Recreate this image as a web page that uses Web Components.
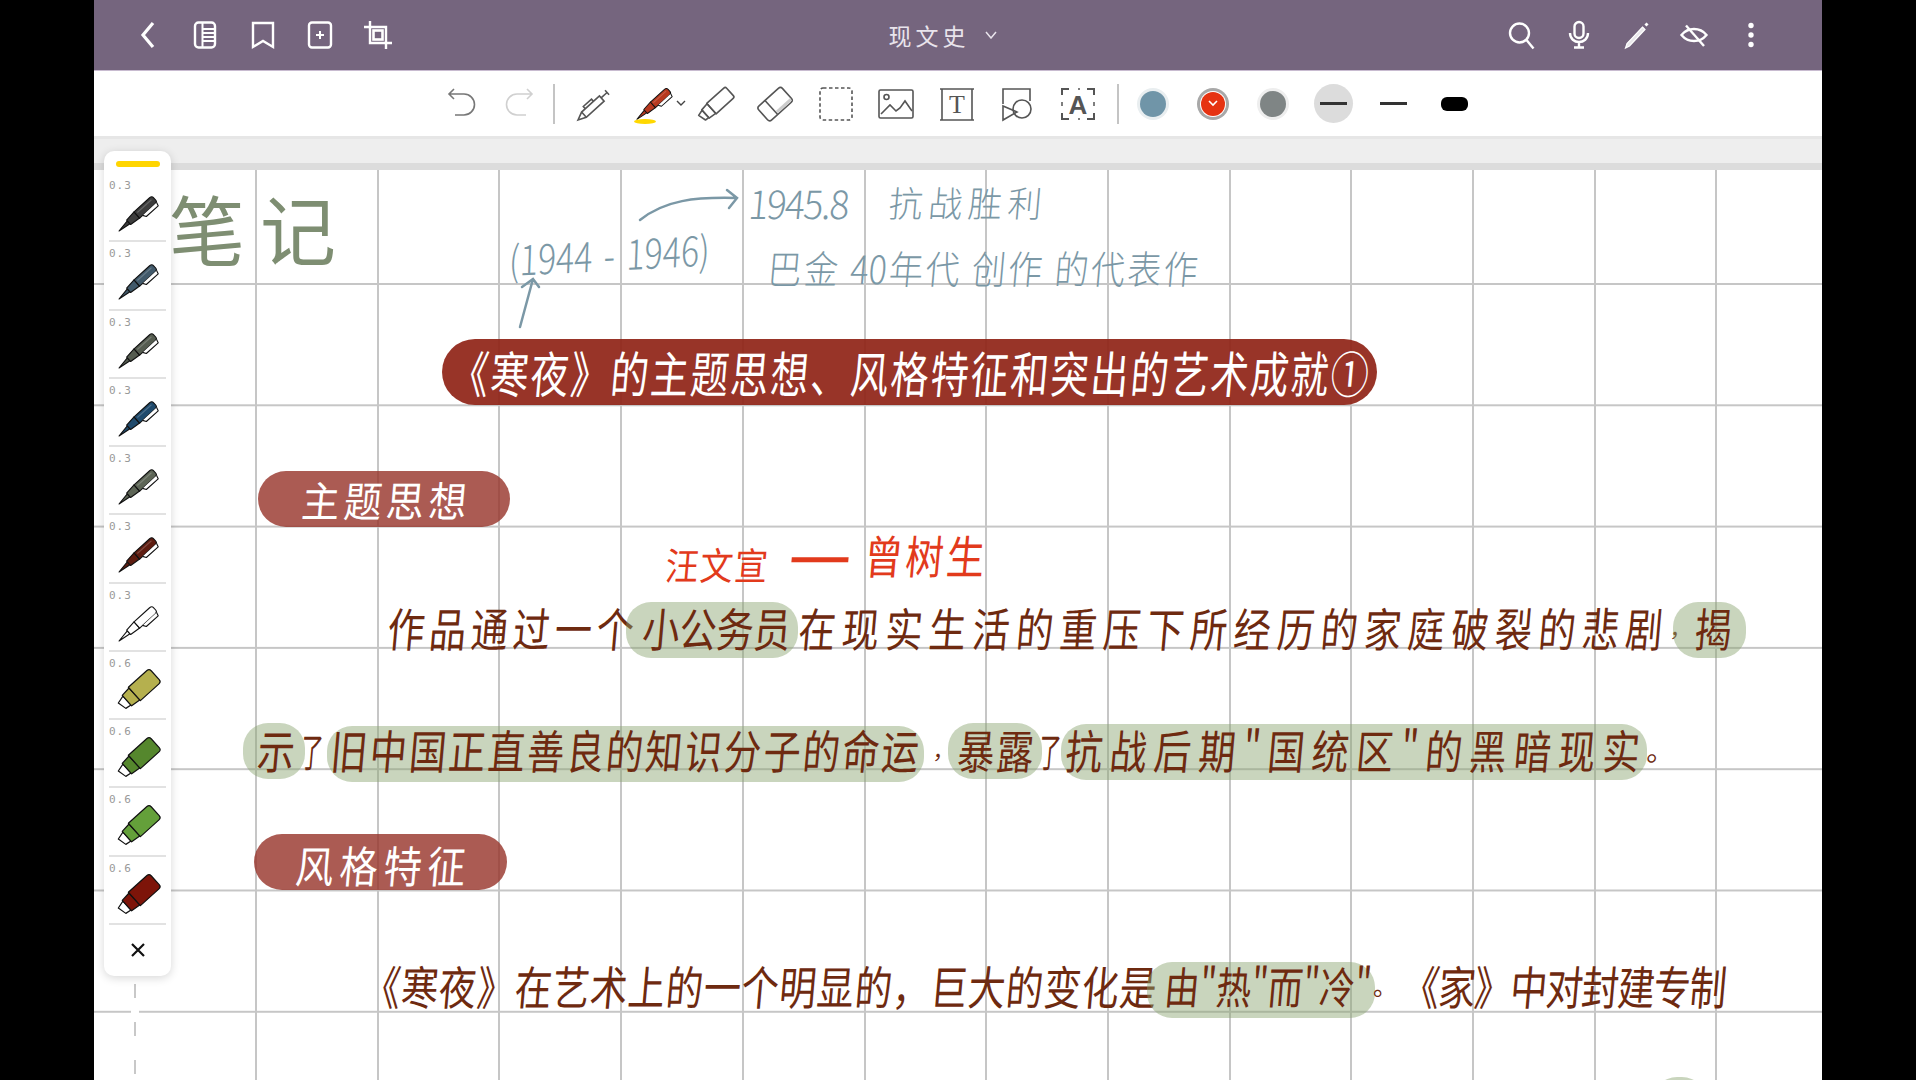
<!DOCTYPE html>
<html lang="zh-CN">
<head>
<meta charset="utf-8">
<title>现文史</title>
<style>
  html, body { margin: 0; background: #000; overflow: hidden; }
  body { font-family: "Noto Sans CJK SC", "Noto Sans", sans-serif; }
</style>
</head>
<body>
<note-app>
  <top-bar slot="top"></top-bar>
  <tool-bar slot="tools"></tool-bar>
  <pen-rail slot="rail"></pen-rail>
  <note-paper slot="paper">
    <note-ink></note-ink>

    <note-line x="169" y="197" style="--fs:76px;--sy:1;--sk:0deg;color:#7e8e72"><hand-run style="--w:167px">笔记</hand-run></note-line>

    <note-line x="749" y="172" style="--fs:37px;--sy:1.05;--fw:300;color:#7b98a6"><hand-run style="--w:113px;--ls:-1.5px">1945.8</hand-run><hand-run style="--w:153px;--ml:27px;--fs:34px">抗战胜利</hand-run></note-line>
    <note-line x="509" y="224" style="--fs:34px;--sy:1.2;--fw:300;--rot:-3deg;color:#7b98a6"><hand-run style="--w:201px">(1944 - 1946)</hand-run></note-line>
    <note-line x="768" y="238" style="--fs:34px;--sy:1.15;--fw:300;color:#7b98a6"><hand-run style="--w:430px">巴金 40年代 创作 的代表作</hand-run></note-line>

    <note-pill x="442" y="339" w="935" h="66" tone="deep"><hand-run style="--w:918px;--fs:38px;--sy:1.3">《寒夜》的主题思想、风格特征和突出的艺术成就①</hand-run></note-pill>
    <note-pill x="258" y="471" w="252" h="56" tone="soft"><hand-run style="--w:165px;--fs:38px;--sy:1.1">主题思想</hand-run></note-pill>
    <note-pill x="254" y="834" w="253" h="56" tone="soft"><hand-run style="--w:170px;--fs:38px;--sy:1.15;--ty:3px">风格特征</hand-run></note-pill>

    <note-line x="666" y="534" style="--fs:33px;--sy:1.15;color:#e23a1c"><hand-run style="--w:102px">汪文宣</hand-run></note-line>
    <note-line x="789" y="527" style="--fs:62px;--sy:1;color:#e23a1c"><hand-run style="--w:61px">一</hand-run></note-line>
    <note-line x="865" y="525" style="--fs:38px;--sy:1.2;color:#e23a1c"><hand-run style="--w:120px">曾树生</hand-run></note-line>

    <note-line x="388" y="600" style="--fs:37px;--ty:-3px;color:#6e2a10">
      <hand-run style="--w:246px">作品通过一个</hand-run>
      <hand-run hl style="--w:148px;--ml:9px;--pl:17px;--pr:7px">小公务员</hand-run>
      <hand-run style="--w:864px;--ml:8px">在现实生活的重压下所经历的家庭破裂的悲剧</hand-run>
      <hand-run style="--w:22px;--ml:7px;--fs:22px;--sy:1">，</hand-run>
      <hand-run hl style="--w:37px;--ml:3px;--pl:22px;--pr:14px">揭</hand-run>
    </note-line>

    <note-line x="258" y="722" style="--fs:37px;--ty:-3px;color:#6e2a10">
      <hand-run hl style="--w:37px;--pl:15px;--pr:10px;--dy:-1px">示</hand-run>
      <hand-run style="--w:22px;--ml:6px;--fs:22px;--sy:1.8">了</hand-run>
      <hand-run hl style="--w:588px;--ml:8px;--pl:4px;--pr:5px;--dy:2px">旧中国正直善良的知识分子的命运</hand-run>
      <hand-run style="--w:22px;--ml:14px;--fs:22px;--sy:1">，</hand-run>
      <hand-run hl style="--w:76px;--ml:3px;--pl:10px;--pr:8px;--dy:-1px">暴露</hand-run>
      <hand-run style="--w:22px;--ml:5px;--fs:22px;--sy:1.8">了</hand-run>
      <hand-run hl style="--w:574px;--ml:5px;--pl:5px;--pr:7px">抗战后期"国统区"的黑暗现实</hand-run>
      <hand-run style="--w:28px;--ml:7px;--fs:28px;--sy:1">。</hand-run>
    </note-line>

    <note-line x="364" y="960" style="--fs:37px;--ty:-5px;color:#6e2a10">
      <hand-run style="--w:793px">《寒夜》在艺术上的一个明显的，巨大的变化是</hand-run>
      <hand-run hl style="--w:203px;--ml:8px;--pl:18px;--pr:7px;--fs:35px">由"热"而"冷"</hand-run>
      <hand-run style="--w:24px;--ml:5px;--fs:24px;--sy:1;--sk:0deg">。</hand-run>
      <hand-run style="--w:320px;--ml:6px;--ls:-4px">《家》中对封建专制</hand-run>
    </note-line>

    <note-line x="1660" y="1075" style="--fs:37px"><hand-run hl style="--w:40px;--pl:8px;--pr:7px"></hand-run></note-line>
  </note-paper>
</note-app>

<script>
// icons are kept in one table, 28 box for the purple bar and 36 for the white one
const ICONS = {
  back: '<path d="M19 2 9 14l10 12" stroke-width="3.2"/>',
  panel: '<rect x="4" y="1.500" width="20" height="25" rx="3.500"/><path d="M11.500 2v24M11.500 8h12M11.500 12h12M11.500 16h12M11.500 20h12" stroke-width="2"/>',
  bookmark: '<path d="M4 2h20v24l-10-6-10 6z"/>',
  addpage: '<rect x="3" y="1.500" width="22" height="25" rx="3"/><path d="M14 10v8M10 14h8" stroke-width="2"/>',
  crop: '<path d="M6 0v22h22M0 6h22v22" stroke-width="2.400"/><rect x="9.500" y="9.500" width="9" height="9" stroke-width="2.600"/>',
  search: '<circle cx="12.500" cy="12" r="9.500"/><path d="m19.500 19 7 8.500"/>',
  mic: '<rect x="9.500" y="1" width="9" height="16" rx="4.500"/><path d="M5 12c0 12 18 12 18 0M14 21v5M9 26.500h10"/>',
  stylus: '<path d="M20.500 6 23 8.500 7.500 25 3.500 27 5 22.500z" fill="currentColor" fill-opacity=".85" stroke-width="1.200"/><path d="m23.500 2.500 2 2" stroke-width="3"/>',
  eyeoff: '<path d="M1.500 14C8 6 20 6 26.500 14 20 22 8 22 1.500 14z"/><path d="M6 4.500 24 25"/>',
  dots: '<g fill="currentColor" stroke="none"><circle cx="14" cy="4.500" r="2.700"/><circle cx="14" cy="14" r="2.700"/><circle cx="14" cy="23.500" r="2.700"/></g>',
  undo: '<path d="M8 3 3 8l5 5M3 8h15a10.500 10.500 0 0 1 0 21H9"/>',
  redo: '<path d="m28 3 5 5-5 5M33 8H18a10.500 10.500 0 0 0 0 21h9"/>',
  fountain: '<g transform="translate(3 34) rotate(-42)"><path d="M0 0 8-3.500H32V3.500H8Z"/><path d="M8-3.500V3.500M13-3.500V-6.500H24V-3.500M32-1H40M40-4V2"/></g>',
  marker: '<g transform="translate(4 32) rotate(-42)" stroke-linejoin="round"><path d="M0-3.500 6-5V5L2 4.500Z"/><path d="M6-5.500 14-6.500V6.500L6 5.500Z"/><path d="M14-7H37Q39-7 39-5V5Q39 7 37 7H14Z"/></g>',
  eraser: '<g transform="translate(4.500 27) rotate(-42)"><rect y="-7" width="32" height="19" rx="3"/><path d="M11-7V12"/><path d="M12 8H31V11H12Z" fill="#ccc" stroke="none"/></g>',
  lasso: '<rect x="2" y="2" width="32" height="32" rx="3" stroke-dasharray="3.500 2.500"/>',
  image: '<rect x="1" y="4" width="34" height="28" rx="1.500"/><circle cx="8.500" cy="11" r="2.500"/><path d="m3 28 9-9 6 6 4-3 5-7 7 10"/>',
  textbox: '<path d="M1 3h34M1 34h34M3 3v31M33 3v31"/><text x="18" y="27" text-anchor="middle" font-family="Liberation Serif" font-size="26" fill="currentColor" stroke="none">T</text>',
  shapes: '<path d="M3 18V3h27v12M3 20v14l14-8z"/><circle cx="22" cy="23" r="9"/>',
  ocr: '<path d="M2 9V3h7M27 3h7v6M2 27v6h7M27 33h7v-6" stroke-width="2"/><path d="M18 3h2M18 33h2M2 16v4M34 16v4" stroke-width="1.500"/><text x="18" y="28" text-anchor="middle" font-family="Liberation Sans" font-weight="700" font-size="26" fill="currentColor" stroke="none">A</text>'
};

class AppIcon extends HTMLElement {
  connectedCallback() {
    const name = this.getAttribute('name');
    const box = this.getAttribute('box') || 28;
    const stroke = this.getAttribute('stroke') || 2.4;
    this.attachShadow({ mode: 'open' }).innerHTML = `
      <style>
        :host { display: block; width: ${box}px; height: ${box}px; }
        svg { display: block; overflow: visible; }
      </style>
      <svg width="${box}" height="${box}" viewBox="0 0 ${box} ${box}" fill="none" stroke="currentColor" stroke-width="${stroke}">${ICONS[name]}</svg>`;
  }
}

// the pens of the side rail, drawn lying flat and then turned
class PenGlyph extends HTMLElement {
  connectedCallback() {
    const c = this.getAttribute('color') || '#444';
    const kind = this.getAttribute('kind') || 'pen';
    const pen = `
      <g transform="translate(1 35) rotate(-42)" stroke="#111" stroke-width="1.100" stroke-linejoin="round">
        <path d="M0 0 13-2V2Z" fill="${c}"/>
        <path d="M13-3 24-4.200V4.200L13 3Z" fill="${c}"/>
        <path d="M24-4.200H45Q48-4.200 48-1.500V1.500Q48 4.200 45 4.200H24Z" fill="${c}"/>
        <path d="M28 4.200 30 7.500H46L47 4" fill="#fff"/>
        <path d="M26-1.500H45" stroke="#fff" stroke-opacity=".2"/>
      </g>`;
    const marker = `
      <g transform="translate(3 32) rotate(-42)" stroke="#111" stroke-width="1.200" stroke-linejoin="round">
        <path d="M0-4 8-6V6L2 5Z" fill="#fff"/>
        <path d="M8-7 18-8V8L8 7Z" fill="${c}"/>
        <path d="M18-9H43Q46-9 46-6V6Q46 9 43 9H18Z" fill="${c}"/>
      </g>`;
    this.attachShadow({ mode: 'open' }).innerHTML = `
      <style>
        :host { display: block; width: 40px; height: 36px; }
        svg { display: block; overflow: visible; }
      </style>
      <svg width="40" height="36" viewBox="0 0 40 36">${kind === 'marker' ? marker : pen}</svg>`;
  }
}

class NoteApp extends HTMLElement {
  constructor() {
    super();
    this.attachShadow({ mode: 'open' }).innerHTML = `
      <style>
        :host { display: block; width: 1916px; height: 1080px; background: #000; position: relative; overflow: hidden; }
        .screen { position: absolute; inset: 0 94px; display: flex; flex-direction: column; background: #fff; overflow: hidden; }
        .strip { flex: none; height: 34px; box-sizing: border-box; background: #eee; border-top: 3px solid #e6e6e6; border-bottom: 7px solid #dcdcdc; }
      </style>
      <div class="screen">
        <slot name="top"></slot>
        <slot name="tools"></slot>
        <div class="strip"></div>
        <slot name="paper"></slot>
      </div>
      <slot name="rail"></slot>`;
  }
}

class TopBar extends HTMLElement {
  constructor() {
    super();
    const left = ['back', 'panel', 'bookmark', 'addpage', 'crop'];
    const right = ['search', 'mic', 'stylus', 'eyeoff', 'dots'];
    const btns = list => list.map(n => `<span class="btn"><app-icon name="${n}"></app-icon></span>`).join('');
    this.attachShadow({ mode: 'open' }).innerHTML = `
      <style>
        :host { display: flex; flex: none; align-items: center; height: 71px; box-sizing: border-box; padding: 0 42px 1px 25px; background: #75657e; border-bottom: 1px solid #c8bbd0; color: #fff; }
        .btn { display: flex; width: 57.500px; height: 70px; align-items: center; justify-content: center; }
        .title { margin-left: 482px; font-size: 23px; letter-spacing: 4px; color: #e9e4ec; font-family: "Noto Sans CJK SC", sans-serif; }
        .caret { margin-left: 15px; }
        .right { margin-left: auto; display: flex; }
        .left { display: flex; }
      </style>
      <div class="left">${btns(left)}</div>
      <span class="title">现文史</span>
      <svg class="caret" width="12" height="8" viewBox="0 0 12 8" fill="none" stroke="#e9e4ec" stroke-width="1.500"><path d="m1 1 5 6 5-6"/></svg>
      <div class="right">${btns(right)}</div>`;
  }
}

class ToolBar extends HTMLElement {
  constructor() {
    super();
    const tool = (n, cls = '') => `<span class="tool ${cls}"><app-icon name="${n}" box="36" stroke="1.600"></app-icon></span>`;
    this.attachShadow({ mode: 'open' }).innerHTML = `
      <style>
        :host { display: flex; flex: none; align-items: center; height: 65px; padding-left: 340px; background: #fff; color: #555; }
        .tool { position: relative; flex: none; width: 60.600px; height: 65px; display: flex; align-items: center; justify-content: center; }
        .undo { color: #777; margin-right: -8px; }
        .redo { color: #d0d0d0; }
        .sep { flex: none; width: 2px; height: 40px; background: #c4c4c4; margin: 0 8px 0 6px; }
        .ink { position: absolute; left: 10px; bottom: 12px; width: 22px; height: 5px; border-radius: 50%; background: #ffd800; }
        .more { position: absolute; right: -2px; top: 29px; }
        .swatch { flex: none; width: 60.300px; display: flex; align-items: center; justify-content: center; }
        .dot { width: 26px; height: 26px; border-radius: 50%; box-shadow: 0 0 0 3px #e9eef0; }
        .blue { background: #7095a8; }
        .gray { background: #7f8585; box-shadow: 0 0 0 3px #eee; }
        .red { width: 24px; height: 24px; background: #e63312; box-shadow: 0 0 0 1px #fff, 0 0 0 4px #a8a8a8; display: flex; align-items: center; justify-content: center; }
        .sel { width: 39px; height: 39px; border-radius: 50%; background: #dcdcdc; display: flex; align-items: center; justify-content: center; }
        .line { width: 27px; height: 3px; background: #333; }
        .fat { width: 27px; height: 14px; border-radius: 6px; background: #000; }
      </style>
      ${tool('undo', 'undo')}
      ${tool('redo', 'redo')}
      <span class="sep"></span>
      ${tool('fountain')}
      <span class="tool">
        <pen-glyph color="#b8391f" style="transform:scale(.9)"></pen-glyph><span class="ink"></span>
        <svg class="more" width="10" height="7" viewBox="0 0 10 7" fill="none" stroke="#444" stroke-width="1.400"><path d="m1 1 4 4 4-4"/></svg>
      </span>
      ${tool('marker')}
      ${tool('eraser')}
      ${tool('lasso')}
      ${tool('image')}
      ${tool('textbox')}
      ${tool('shapes')}
      ${tool('ocr')}
      <span class="sep" style="margin:0 4px 0 8px"></span>
      <span class="swatch"><span class="dot blue"></span></span>
      <span class="swatch"><span class="dot red"><svg width="10" height="7" viewBox="0 0 10 7" fill="none" stroke="#fff" stroke-width="1.600"><path d="m1 1 4 4 4-4"/></svg></span></span>
      <span class="swatch"><span class="dot gray"></span></span>
      <span class="swatch"><span class="sel"><span class="line"></span></span></span>
      <span class="swatch"><span class="line"></span></span>
      <span class="swatch"><span class="fat"></span></span>`;
  }
}

class PenRail extends HTMLElement {
  constructor() {
    super();
    const pens = [
      ['0.3', 'pen', '#3d3d3d'], ['0.3', 'pen', '#41596a'], ['0.3', 'pen', '#555c50'], ['0.3', 'pen', '#1f4a6c'],
      ['0.3', 'pen', '#5d6556'], ['0.3', 'pen', '#5e1c10'], ['0.3', 'pen', '#ffffff'], ['0.6', 'marker', '#b5b04e'],
      ['0.6', 'marker', '#55872d'], ['0.6', 'marker', '#64a03a'], ['0.6', 'marker', '#7d1409']
    ];
    const items = pens.map(([size, kind, color]) => `
      <div class="item">
        <span class="size">${size}</span>
        <pen-glyph kind="${kind}" color="${color}"></pen-glyph>
      </div>`).join('');
    this.attachShadow({ mode: 'open' }).innerHTML = `
      <style>
        :host { position: absolute; left: 104px; top: 151px; width: 67px; height: 825px; display: flex; flex-direction: column; background: #fff; border-radius: 10px; box-shadow: 0 2px 10px rgba(0,0,0,.16); }
        .bar { flex: none; height: 6px; margin: 10px 11px 7px 12px; border-radius: 3px; background: #ffd500; }
        .item { flex: none; height: 68.250px; box-sizing: border-box; margin: 0 5px; border-bottom: 2px solid #e2e2e2; position: relative; }
        .size { position: absolute; left: 0; top: 6px; font: 11px/12px "DejaVu Sans Mono", monospace; letter-spacing: 1px; color: #999; }
        pen-glyph { position: absolute; left: 9px; top: 22px; }
        .close { flex: 1; display: flex; align-items: center; justify-content: center; }
      </style>
      <div class="bar"></div>
      ${items}
      <div class="close"><svg width="16" height="16" viewBox="0 0 16 16" fill="none" stroke="#111" stroke-width="2.200"><path d="m2 2 12 12M14 2 2 14"/></svg></div>`;
  }
}

class NotePaper extends HTMLElement {
  constructor() {
    super();
    this.attachShadow({ mode: 'open' }).innerHTML = `
      <style>
        :host { display: block; flex: 1; position: relative; overflow: hidden; background-color: #fff;
          background-image: repeating-linear-gradient(180deg, #c6c6c6 0 2px, transparent 2px 121.300px);
          background-position: 0 113px; background-size: 100% 121.300px; }
        .cols { position: absolute; left: 161px; right: 0; top: 0; bottom: 0;
          background-image: repeating-linear-gradient(90deg, #c6c6c6 0 2px, transparent 2px 121.700px); }
        .cut { position: absolute; left: 40px; top: 806px; width: 2px; height: 104px; background: repeating-linear-gradient(180deg, #fff 0 8px, #c8c8c8 8px 22px, #fff 22px 38px); box-shadow: 0 0 0 3px #fff; }
      </style>
      <div class="cols"></div>
      <div class="cut"></div>
      <slot></slot>`;
  }
}

// one handwritten line on the page, x and y are screen coordinates, since the canvas starts at 94,170
class NoteLine extends HTMLElement {
  constructor() {
    super();
    this.attachShadow({ mode: 'open' }).innerHTML = `
      <style>
        :host { position: absolute; display: flex; height: 60px; font-weight: var(--fw, 400); }
      </style>
      <slot></slot>`;
  }
  connectedCallback() {
    this.style.left = (this.getAttribute('x') - 94) + 'px';
    this.style.top = (this.getAttribute('y') - 170) + 'px';
  }
}

class HandRun extends HTMLElement {
  constructor() {
    super();
    this.attachShadow({ mode: 'open' }).innerHTML = `
      <style>
        :host { display: block; flex: none; position: relative; width: var(--w); margin-left: var(--ml, 0); height: 60px; font-size: var(--fs, 37px); line-height: 60px; letter-spacing: var(--ls, 0); }
        .mark { display: none; position: absolute; left: calc(0px - var(--pl, 0px)); right: calc(0px - var(--pr, 0px)); top: calc(2px + var(--dy, 0px)); bottom: calc(2px - var(--dy, 0px)); border-radius: 25px; background: rgba(135,162,109,.45); }
        :host([hl]) .mark { display: block; }
        .text { position: relative; display: block; text-align: justify; text-align-last: justify; transform: translateY(var(--ty, 0px)) rotate(var(--rot, 0deg)) skewX(var(--sk, -5deg)) scaleY(var(--sy, 1.25)); }
      </style>
      <span class="mark"></span>
      <span class="text"><slot></slot></span>`;
  }
}

class NotePill extends HTMLElement {
  constructor() {
    super();
    this.attachShadow({ mode: 'open' }).innerHTML = `
      <style>
        :host { position: absolute; display: flex; align-items: center; justify-content: center; color: #fff; }
        :host([tone="deep"]) { background: rgba(143,35,22,.92); border-radius: 33px; }
        :host([tone="soft"]) { background: rgba(150,50,40,.8); border-radius: 28px; }
      </style>
      <slot></slot>`;
  }
  connectedCallback() {
    this.style.left = (this.getAttribute('x') - 94) + 'px';
    this.style.top = (this.getAttribute('y') - 170) + 'px';
    this.style.width = this.getAttribute('w') + 'px';
    this.style.height = this.getAttribute('h') + 'px';
  }
}

// the two arrows drawn by hand above the title
class NoteInk extends HTMLElement {
  constructor() {
    super();
    this.attachShadow({ mode: 'open' }).innerHTML = `
      <style>
        :host { position: absolute; inset: 0; pointer-events: none; }
        svg { display: block; }
      </style>
      <svg width="1728" height="910" viewBox="94 170 1728 910" fill="none" stroke="#7b98a6" stroke-width="2.500" stroke-linecap="round">
        <path d="M640 220C665 200 695 197 736 198M727 190l10 8-8 10"/>
        <path d="M520 327 533 279M522 287l11-8 6 8"/>
      </svg>`;
  }
}

customElements.define('app-icon', AppIcon);
customElements.define('pen-glyph', PenGlyph);
customElements.define('top-bar', TopBar);
customElements.define('tool-bar', ToolBar);
customElements.define('pen-rail', PenRail);
customElements.define('note-paper', NotePaper);
customElements.define('note-line', NoteLine);
customElements.define('hand-run', HandRun);
customElements.define('note-pill', NotePill);
customElements.define('note-ink', NoteInk);
customElements.define('note-app', NoteApp);
</script>
</body>
</html>
